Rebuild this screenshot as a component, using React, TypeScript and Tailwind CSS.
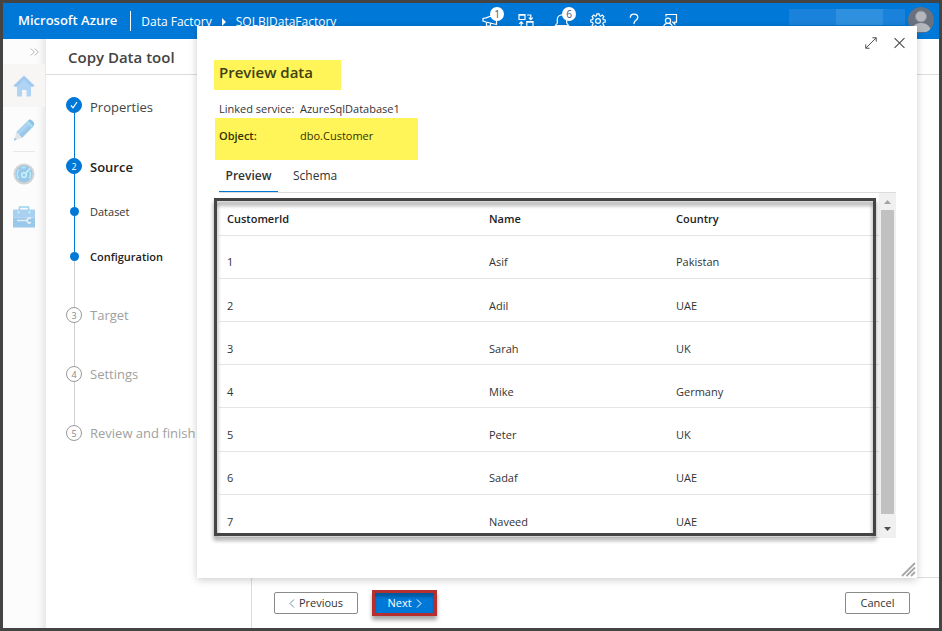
import type { ReactNode } from "react";
import clsx from "clsx";

const customers = [
  { id: 1, name: "Asif", country: "Pakistan" },
  { id: 2, name: "Adil", country: "UAE" },
  { id: 3, name: "Sarah", country: "UK" },
  { id: 4, name: "Mike", country: "Germany" },
  { id: 5, name: "Peter", country: "UK" },
  { id: 6, name: "Sadaf", country: "UAE" },
  { id: 7, name: "Naveed", country: "UAE" },
];

const HeaderButton = ({ label, badge, children }: { label: string; badge?: number; children: ReactNode }) => (
  <button aria-label={label} className="relative w-9 h-9 flex items-center justify-center text-white">
    <svg width="16" height="16" viewBox="0 0 16 16" fill="none" stroke="currentColor" strokeWidth="1.2">
      {children}
    </svg>
    {badge && (
      <span className="absolute top-1 right-1 w-[14px] h-[14px] rounded-full bg-white text-[#33558b] text-[10px] leading-[14px] text-center">
        {badge}
      </span>
    )}
  </button>
);

const Header = () => (
  <header className="h-9 shrink-0 bg-[#0078d7] text-white flex items-center">
    <a href="#" className="pl-[15px] text-[13px] font-semibold whitespace-nowrap">Microsoft Azure</a>
    <div className="ml-[13px] mr-[10px] w-px h-5 bg-white"></div>
    <nav className="flex items-center pt-px text-xs whitespace-nowrap">
      <a href="#">Data Factory</a>
      <svg width="4" height="8" viewBox="0 0 4 8" fill="currentColor" className="mx-[10px]">
        <path d="M0 0l4 4-4 4z" />
      </svg>
      <a href="#">SQLBIDataFactory</a>
    </nav>
    <div className="ml-auto mr-[101px] flex">
      <HeaderButton label="What's new" badge={1}>
        <path d="M1 5.500v2.500l3 1L14.500 11.500V1L4 4.800zM4.500 9v4h4v-2.700" />
      </HeaderButton>
      <HeaderButton label="Switch factory">
        <path d="M1 1.500h6v5H1zM8.800 8.500H15v5H8.800z" />
        <path d="M1 2h6M9 9h6" strokeWidth="1.600" />
        <path d="M9 2h3.800v4.500M10.800 4.600l2 2 2-2M7 13.500H3.200V9M1.200 10.800l2-2 2 2" />
      </HeaderButton>
      <HeaderButton label="Notifications" badge={6}>
        <path d="M1.500 12.500h13l-1.800-2.500V6.500a4.700 4.700 0 0 0-9.400 0V10zM6 12.800a2 2 0 0 0 4 0" />
      </HeaderButton>
      <HeaderButton label="Settings">
        <path d="M6.900.8h2.200l.4 1.900 1.100.5 1.700-1.100 1.600 1.600-1.100 1.700.5 1.100 1.900.4v2.200l-1.900.4-.5 1.100 1.100 1.700-1.600 1.600-1.700-1.100-1.100.5-.4 1.900H6.900l-.4-1.900-1.100-.5-1.700 1.100-1.600-1.600 1.100-1.700-.5-1.100-1.900-.4V6.900l1.900-.4.5-1.100-1.100-1.700 1.600-1.600 1.700 1.100 1.100-.5z" />
        <circle cx="8" cy="8" r="2.400" />
      </HeaderButton>
      <HeaderButton label="Help">
        <path d="M4.300 4.800C4.300 2.500 5.800 1.200 8 1.200s3.800 1.300 3.800 3.300C11.800 7.200 8 7.400 8 10.300v.7M8 12.800v1.500" strokeWidth="1.300" />
      </HeaderButton>
      <HeaderButton label="Feedback">
        <path d="M4 3.500V1.500h10.500v7.700h-1.800v2l-2-2H10" />
        <circle cx="6" cy="7.800" r="2.600" />
        <path d="M1.500 15c0-2.800 1.900-4.600 4.500-4.600s4.500 1.800 4.500 4.600" />
      </HeaderButton>
    </div>
    <div className="w-[116px] h-4 mb-[9px] flex">
      <div className="w-[47px] bg-[#1a82da]"></div>
      <div className="w-[47px] bg-[#2e90de]"></div>
      <div className="flex-1 bg-[#1a82da]"></div>
    </div>
    <button aria-label="Account" className="ml-[3px] mr-[5px] w-[26px] h-[26px] mb-[3px] rounded-full overflow-hidden bg-[#69707e]">
      <svg width="26" height="26" viewBox="0 0 26 26" fill="#b4b8bd">
        <circle cx="13" cy="9.500" r="5.500" stroke="#8b919b" />
        <path d="M3 25c.5-6 4.500-9 10-9s9.500 3 10 9z" />
      </svg>
    </button>
  </header>
);

const Sidebar = () => (
  <aside className="w-[43px] shrink-0 pr-px flex flex-col bg-[#fcfcfc] shadow-[inset_-8px_0_8px_-6px_rgba(0,0,0,0.12)]">
    <button aria-label="Expand" className="h-[25px] pr-[6px] flex items-center justify-end">
      <svg width="9" height="8" viewBox="0 0 9 8" fill="none" stroke="#b5b5b5">
        <path d="M.8.500L4.300 4 .8 7.500M4.800.5L8.300 4 4.800 7.500" />
      </svg>
    </button>
    <a href="#" aria-label="Home" className="h-[43px] flex items-center justify-center bg-[#f8f6f4]">
      <svg width="22" height="22" viewBox="0 0 22 22">
        <path d="M11 2.500L4 9.500v12h5V15h4.500v6.500H18v-12z" fill="#b0d4f4" />
        <path d="M11 .5L.5 10.500l1.200 1.300h2.300L11 5l7 6.800h2.300l1.200-1.300z" fill="#a3cbf0" />
      </svg>
    </a>
    <a href="#" aria-label="Author" className="h-[44px] pt-[2px] flex items-center justify-center">
      <svg width="22" height="22" viewBox="0 0 22 22">
        <path d="M3.500 13L15 1.800l5.500 5.400L9 19z" fill="#9bc8eb" />
        <path d="M3.500 13l2.700 2.800L17.800 4.500 15 1.800z" fill="#aad2f1" />
        <path d="M14 2.700l2-1.900c1.600-1.300 6.400 3.300 5 5.200l-1.700 2.200z" fill="#8fc0e6" />
        <path d="M13.500 3.200l1.500-1.400 5.500 5.500-1.500 1.400z" fill="#a5e2ee" />
        <path d="M3.500 13L9 19 1 21.500z" fill="#e3e6e9" />
        <path d="M1.700 18.700L1 21.500l2.700-.8z" fill="#8fbfe4" />
      </svg>
    </a>
    <hr className="mx-[10px] border-[#e8e8e8]" />
    <a href="#" aria-label="Monitor" className="h-[43px] flex items-center justify-center">
      <svg width="22" height="22" viewBox="0 0 22 22" fill="none">
        <circle cx="11" cy="11" r="9.500" fill="#99c7ea" stroke="#d4d4d4" strokeWidth="2" />
        <path d="M6 15.500a6.500 6.500 0 0 1 0-9M8.500 5a6.500 6.500 0 0 1 4-.4M16.800 8.500a6.500 6.500 0 0 1-.8 7" stroke="#b6ecf5" strokeWidth="1.400" />
        <circle cx="11" cy="12" r="2.300" stroke="#c4f2f8" strokeWidth="1.600" />
        <path d="M12.500 10.500L17 5.500" stroke="#c4f2f8" strokeWidth="1.600" />
      </svg>
    </a>
    <a href="#" aria-label="Manage" className="h-[43px] flex items-center justify-center">
      <svg width="24" height="22" viewBox="0 0 24 22">
        <path d="M7.500 4V1h9v3" fill="none" stroke="#9bd3ee" strokeWidth="1.500" />
        <path d="M1 3.500h22v8H1z" fill="#a9d0f0" />
        <path d="M1 11.500h22v10H1z" fill="#99c8eb" />
        <path d="M5.500 5h2v2.500h-2zM16.500 5h2v2.500h-2z" fill="#b8f0f8" />
        <path d="M5 14.500h10M19 12.600a2.400 2.400 0 1 0 0 3.800" fill="none" stroke="#e4edf4" strokeWidth="1.700" />
      </svg>
    </a>
  </aside>
);

type StepProps = { label: string; marker: ReactNode; state: "done" | "current" | "todo"; last?: boolean };

const Step = ({ label, marker, state, last }: StepProps) => (
  <li
    className={clsx(
      "flex gap-2",
      state === "done" && "h-[61px]",
      state === "current" && "h-[45px]",
      state === "todo" && "h-[59px]"
    )}
  >
    <div className="w-4 flex flex-col items-center">
      <span
        className={clsx(
          "w-4 h-4 shrink-0 rounded-full border text-[9px] leading-none flex items-center justify-center",
          state === "todo" ? "border-[#999] text-[#888] bg-white" : "border-[#0078d7] bg-[#0078d7] text-white"
        )}
      >
        {marker}
      </span>
      {!last && <span className={clsx("w-px flex-1", state === "todo" ? "bg-[#d0d0d0]" : "bg-[#0078d7]")}></span>}
    </div>
    <span
      className={clsx(
        "text-[13px] whitespace-nowrap",
        state === "done" && "leading-5 text-[#444]",
        state === "current" && "leading-[18px] text-[#222] font-semibold",
        state === "todo" && "leading-4 text-[#a0a0a0]"
      )}
    >
      {label}
    </span>
  </li>
);

const SubStep = ({ label, active }: { label: string; active?: boolean }) => (
  <li className={clsx("flex gap-2", active ? "h-[59px]" : "h-[45px]")}>
    <div className="w-4 flex flex-col items-center">
      <span className="w-px h-1 bg-[#0078d7]"></span>
      <span className="w-[9px] h-[9px] shrink-0 rounded-full bg-[#0078d7]"></span>
      <span className={clsx("w-px flex-1", active ? "bg-[#d0d0d0]" : "bg-[#0078d7]")}></span>
    </div>
    <span className={clsx("text-[11px] leading-[18px]", active ? "text-[#222] font-semibold" : "text-[#333]")}>{label}</span>
  </li>
);

const Steps = () => (
  <ol className="w-[206px] shrink-0 border-r border-[#dcdcdc] pl-5 pt-[22px]">
    <Step
      label="Properties"
      state="done"
      marker={
        <svg width="8" height="8" viewBox="0 0 8 8" fill="none" stroke="currentColor" strokeWidth="1.200">
          <path d="M1 4.500l2 2.300L7 1" />
        </svg>
      }
    />
    <Step label="Source" state="current" marker="2" />
    <SubStep label="Dataset" />
    <SubStep label="Configuration" active />
    <Step label="Target" state="todo" marker="3" />
    <Step label="Settings" state="todo" marker="4" />
    <Step label="Review and finish" state="todo" marker="5" last />
  </ol>
);

const ScrollBar = () => (
  <div className="w-[17px] shrink-0 bg-[#f0f0f0] flex flex-col items-center">
    <button aria-label="Scroll up" className="h-[17px] flex items-center">
      <svg width="7" height="4" viewBox="0 0 7 4" fill="#a3a3a3"><path d="M0 4l3.500-4L7 4z" /></svg>
    </button>
    <div className="w-[13px] flex-1 bg-[#c1c1c1]"></div>
    <button aria-label="Scroll down" className="h-6 flex items-center pt-[6px]">
      <svg width="7" height="4" viewBox="0 0 7 4" fill="#505050"><path d="M0 0h7L3.500 4z" /></svg>
    </button>
  </div>
);

const PreviewDialog = () => (
  <section
    role="dialog"
    aria-labelledby="preview-title"
    className="absolute top-[23px] left-[194px] right-[22px] bg-white pl-[17px] pr-[21px] pt-[34px] pb-10 shadow-[0_2px_8px_rgba(0,0,0,0.2)]"
  >
    <div className="absolute top-[11px] right-3 flex gap-[17px]">
      <button aria-label="Expand dialog">
        <svg width="12" height="12" viewBox="0 0 13 13" fill="none" stroke="#444">
          <path d="M1 12L12 1M8 .8h4.200V5M.8 8v4.200H5" />
        </svg>
      </button>
      <button aria-label="Close">
        <svg width="11" height="12" viewBox="0 0 12 12" fill="none" stroke="#444" strokeWidth="1.100">
          <path d="M.6.600l10.800 10.800M11.400.6L.6 11.400" />
        </svg>
      </button>
    </div>

    <h2 id="preview-title" className="w-[127px] h-[30px] pl-[5px] bg-[#fff559] text-[15px] leading-6 font-semibold text-[#404010] whitespace-nowrap">
      Preview data
    </h2>
    <dl className="mt-[10px] text-[11px] text-[#333]">
      <div className="flex h-[18px] pl-[5px] leading-[18px]">
        <dt className="w-[81px] font-medium whitespace-nowrap">Linked service:</dt>
        <dd>AzureSqlDatabase1</dd>
      </div>
      <div className="ml-px flex w-[203px] h-[42px] pl-1 leading-9 bg-[#fff559] text-[#333300]">
        <dt className="w-[81px] font-semibold">Object:</dt>
        <dd>dbo.Customer</dd>
      </div>
    </dl>

    <div role="tablist" className="ml-[5px] flex text-xs leading-[30px] text-[#333] border-b border-[#dcdcdc]">
      <button role="tab" aria-selected="true" className="w-[59px] h-8 font-semibold border-b border-[#0078d7]">Preview</button>
      <button role="tab" aria-selected="false" className="px-[15px] h-8">Schema</button>
    </div>

    <div className="relative ml-[5px] min-h-[345px] flex">
      <table className="flex-1 table-fixed text-left text-[11px] text-[#333]">
        <thead>
          <tr className="h-[42px] border-b border-[#e5e5e5] text-[#222]">
            <th className="w-[262px] pl-2 pt-[10px] font-semibold">CustomerId</th>
            <th className="w-[187px] pl-2 pt-[10px] font-semibold">Name</th>
            <th className="pl-2 pt-[10px] font-semibold">Country</th>
          </tr>
        </thead>
        <tbody>
          {customers.map((c) => (
            <tr key={c.id} className="h-[43px] border-b border-[#e5e5e5]">
              <td className="pl-2 pt-3">{c.id}</td>
              <td className="pl-2 pt-3">{c.name}</td>
              <td className="pl-2 pt-3">{c.country}</td>
            </tr>
          ))}
        </tbody>
      </table>
      <ScrollBar />
      {/* Callout frame around the grid */}
      <div className="pointer-events-none absolute -left-[5px] top-[5px] right-5 bottom-[2px] border-3 border-[#444] drop-shadow-[0_4px_2px_rgba(0,0,0,0.45)]"></div>
    </div>

    <svg width="15" height="15" viewBox="0 0 15 15" stroke="#a8a8a8" strokeWidth="1.800" className="absolute right-[1px] bottom-[1px]">
      <path d="M1 14L14 1M5.500 14L14 5.500M10 14l4-4" />
    </svg>
  </section>
);

const Footer = () => (
  <footer className="mt-auto h-[51px] border-t border-[#dcdcdc] flex items-center pl-[22px] pr-[29px] text-[11px] text-[#333]">
    <button className="w-[84px] h-[22px] border border-[#8a8a8a] rounded-xs bg-white flex items-center justify-center gap-1">
      <svg width="6" height="9" viewBox="0 0 6 9" fill="none" stroke="#6c8ba8"><path d="M5 .500L1 4.500l4 4" /></svg>
      Previous
    </button>
    <button className="ml-[14px] w-[65px] h-[26px] border-3 border-[#b5302f] bg-[#0078d7] text-white font-medium flex items-center justify-center gap-1 shadow-[0_4px_4px_rgba(0,0,0,0.35),inset_0_4px_3px_rgba(0,0,0,0.25)]">
      Next
      <svg width="6" height="9" viewBox="0 0 6 9" fill="none" stroke="currentColor"><path d="M1 .500l4 4-4 4" /></svg>
    </button>
    <button className="ml-auto w-[65px] h-[22px] border border-[#8a8a8a] rounded-xs bg-white">Cancel</button>
  </footer>
);

const App = () => {
  return (
    <div className="relative min-h-screen flex flex-col bg-white border-3 border-[#444] overflow-hidden font-['Open_Sans','Noto_Sans',sans-serif]">
      <Header />
      <div className="flex flex-1">
        <Sidebar />
        <main className="flex-1 flex flex-col min-w-0">
          <h1 className="h-9 shrink-0 pl-[22px] border-b border-[#dcdcdc] text-[15px] leading-9 font-semibold text-[#444]">
            Copy Data tool
          </h1>
          <div className="flex flex-1">
            <Steps />
            <div className="flex-1 flex flex-col">
              <Footer />
            </div>
          </div>
        </main>
      </div>
      <PreviewDialog />
    </div>
  );
};

export default App;
